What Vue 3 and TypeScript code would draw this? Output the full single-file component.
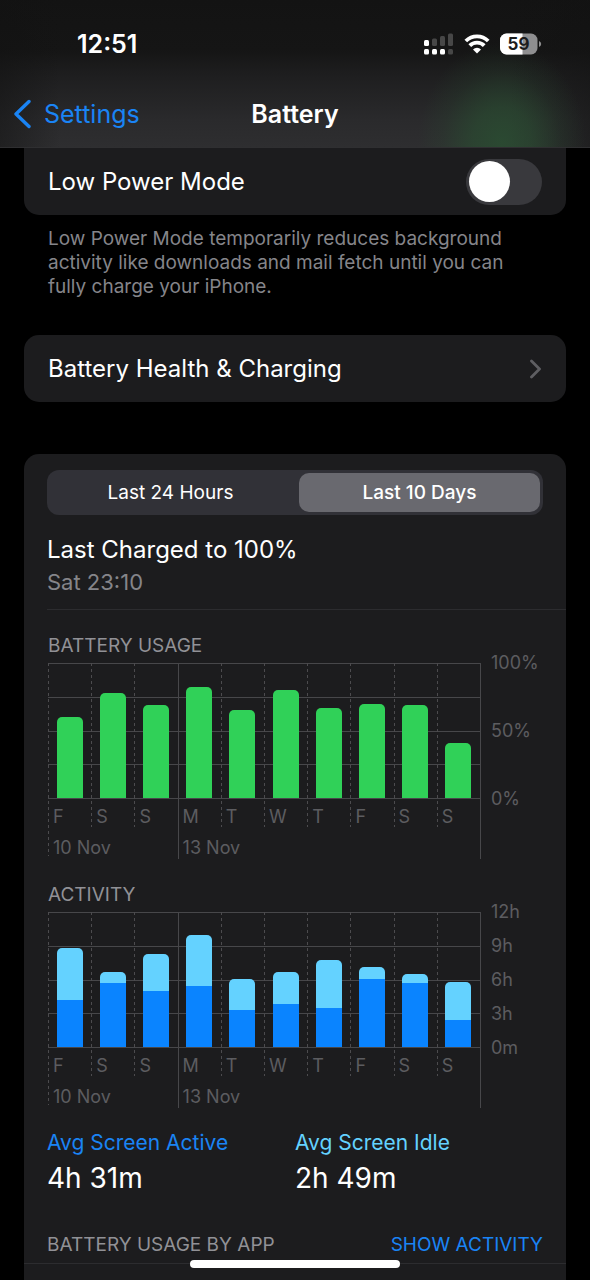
<script setup lang="ts">
import { ref } from 'vue'

interface Segment {
  kind: string
  share: number
}

interface Day {
  letter: string
  date?: string
  weekStart?: boolean
  total: number
  segments: Segment[]
}

interface Chart {
  title: string
  rows: number
  ticks: string[]
  days: Day[]
}

const letters = ['F', 'S', 'S', 'M', 'T', 'W', 'T', 'F', 'S', 'S']
const dates: Record<number, string> = { 0: '10 Nov', 3: '13 Nov' }

const usagePercent = [60, 78, 69, 82, 65, 80, 67, 70, 69, 41]
const totalMinutes = [526, 400, 496, 597, 363, 400, 464, 425, 389, 345]
const activeMinutes = [252, 343, 300, 324, 196, 231, 206, 361, 340, 142]

function makeDay(index: number, total: number, segments: Segment[]): Day {
  return {
    letter: letters[index],
    date: dates[index],
    weekStart: letters[index] === 'M',
    total,
    segments,
  }
}

const charts: Chart[] = [
  {
    title: 'BATTERY USAGE',
    rows: 4,
    ticks: ['100%', '50%', '0%'],
    days: usagePercent.map((p, i) => makeDay(i, p, [{ kind: 'usage', share: 100 }])),
  },
  {
    title: 'ACTIVITY',
    rows: 4,
    ticks: ['12h', '9h', '6h', '3h', '0m'],
    days: totalMinutes.map((m, i) => {
      const active = (activeMinutes[i] / m) * 100
      return makeDay(i, (m / 720) * 100, [
        { kind: 'idle', share: 100 - active },
        { kind: 'active', share: active },
      ])
    }),
  },
]

const ranges = ['Last 24 Hours', 'Last 10 Days']
const selectedRange = ref('Last 10 Days')
const lowPower = ref(false)
</script>

<template>
  <div class="screen">
    <header class="top">
      <div class="status">
        <time class="clock">12:51</time>
        <div class="indicators">
          <svg class="signal" width="30" height="22" viewBox="0 0 30 22" aria-hidden="true">
            <g fill="#fff">
              <rect x="0" y="7" width="5" height="6" rx="1.5" />
              <rect x="0" y="16" width="5" height="5.5" rx="1.5" />
              <rect x="8" y="16" width="5" height="5.5" rx="1.5" />
              <rect x="16" y="16" width="5" height="5.5" rx="1.5" />
            </g>
            <g fill="#474747">
              <rect x="8" y="5.5" width="5" height="7.5" rx="1.5" />
              <rect x="16" y="3" width="5" height="10" rx="1.5" />
              <rect x="24" y="0.5" width="5" height="12.5" rx="1.5" />
              <rect x="24" y="16" width="5" height="5.5" rx="1.5" />
            </g>
          </svg>
          <svg class="wifi" width="26" height="20" viewBox="0 0 26 20" aria-hidden="true">
            <g fill="none" stroke="#fff" stroke-width="3.8">
              <path d="M1.8 7 A16 16 0 0 1 24.2 7" />
              <path d="M5.8 11.6 A10 10 0 0 1 20.2 11.6" />
            </g>
            <path d="M13 19.4 L9 15.4 A5.6 5.6 0 0 1 17 15.4 Z" fill="#fff" />
          </svg>
          <svg class="cell" width="42" height="22" viewBox="0 0 42 22" role="img" aria-label="59 percent">
            <defs>
              <clipPath id="cell-body"><rect x="0" y="0.5" width="37.5" height="21" rx="6.5" /></clipPath>
            </defs>
            <g clip-path="url(#cell-body)">
              <rect width="38" height="22" fill="#8f8f90" />
              <rect width="22.5" height="22" fill="#fff" />
            </g>
            <path d="M39 8 Q41.2 8.8 41.2 11 Q41.2 13.2 39 14 Z" fill="#8f8f90" />
            <text x="18.5" y="17.2" text-anchor="middle" class="cell-text">59</text>
          </svg>
        </div>
      </div>
      <nav class="nav">
        <a class="back" href="#settings">
          <svg width="18" height="30" viewBox="0 0 18 30" aria-hidden="true">
            <path d="M15 2.5 L2 15 L15 27.5" fill="none" stroke="currentColor" stroke-width="3.4" stroke-linecap="round" stroke-linejoin="round" />
          </svg>
          <span>Settings</span>
        </a>
        <h1>Battery</h1>
      </nav>
    </header>

    <main class="content">
      <section class="card power">
        <label class="row" for="low-power">
          <span>Low Power Mode</span>
          <input id="low-power" v-model="lowPower" class="switch" type="checkbox" role="switch" />
        </label>
      </section>
      <p class="note">
        Low Power Mode temporarily reduces background activity like downloads and mail fetch until you can fully charge your iPhone.
      </p>

      <a class="card row health" href="#health">
        <span>Battery Health &amp; Charging</span>
        <svg width="12" height="20" viewBox="0 0 12 20" aria-hidden="true">
          <path d="M1.5 2 L9.5 10 L1.5 18" fill="none" stroke="#5e5e62" stroke-width="2.8" stroke-linecap="round" stroke-linejoin="round" />
        </svg>
      </a>

      <section class="card stats">
        <div class="segmented" role="group" aria-label="Time range">
          <button
            v-for="range in ranges"
            :key="range"
            type="button"
            :class="{ selected: range === selectedRange }"
            :aria-pressed="range === selectedRange"
            @click="selectedRange = range"
          >{{ range }}</button>
        </div>

        <div class="charged">
          <h2>Last Charged to 100%</h2>
          <p>Sat 23:10</p>
        </div>

        <section v-for="chart in charts" :key="chart.title" class="chart">
          <h3>{{ chart.title }}</h3>
          <div class="graph">
            <div class="plot">
              <div class="lines" aria-hidden="true">
                <i v-for="n in chart.rows" :key="n"></i>
              </div>
              <div
                v-for="(day, i) in chart.days"
                :key="i"
                class="day"
                :class="{ dated: day.date, solid: day.weekStart }"
              >
                <div class="slot">
                  <div class="bar" :style="{ height: day.total + '%' }">
                    <div
                      v-for="segment in day.segments"
                      :key="segment.kind"
                      :class="segment.kind"
                      :style="{ height: segment.share + '%' }"
                    ></div>
                  </div>
                </div>
                <span class="letter">{{ day.letter }}</span>
                <span v-if="day.date" class="date">{{ day.date }}</span>
              </div>
            </div>
            <div class="ticks">
              <span v-for="tick in chart.ticks" :key="tick">{{ tick }}</span>
            </div>
          </div>
        </section>

        <dl class="averages">
          <div>
            <dt class="is-active">Avg Screen Active</dt>
            <dd>4h 31m</dd>
          </div>
          <div>
            <dt class="is-idle">Avg Screen Idle</dt>
            <dd>2h 49m</dd>
          </div>
        </dl>

        <div class="apps">
          <h3>BATTERY USAGE BY APP</h3>
          <button type="button">SHOW ACTIVITY</button>
        </div>
      </section>
    </main>
    <div class="home" aria-hidden="true"></div>
  </div>
</template>

<style>
body {
  margin: 0;
  background: #000;
}
</style>

<style scoped>
.screen {
  display: flex;
  flex-direction: column;
  min-height: 100vh;
  background: #000;
  color: #fff;
  font-family: Inter, "Liberation Sans", sans-serif;
  font-size: 24px;
  line-height: 32px;
}

.screen *,
.screen *::before {
  box-sizing: border-box;
}

h1, h2, h3, p, dl, dd {
  margin: 0;
  font-size: inherit;
  font-weight: 400;
}

a {
  color: inherit;
  text-decoration: none;
}

button {
  padding: 0;
  border: 0;
  background: none;
  color: inherit;
  font: inherit;
}

svg {
  display: block;
  flex: none;
}

.top {
  display: flex;
  flex-direction: column;
  height: 148px;
  border-bottom: 1px solid #2f2f31;
  background:
    radial-gradient(ellipse 84px 100px at 502px 142px, rgba(42, 80, 50, 0.8), rgba(42, 80, 50, 0.6) 35%, rgba(42, 80, 50, 0.2) 70%, transparent),
    linear-gradient(90deg, rgba(18, 18, 18, 0.5), transparent 60px calc(100% - 80px), rgba(18, 18, 18, 0.5)),
    linear-gradient(#131313, #151515 50px, #1e1e1f 75px, #2a2a2c 120px, #2e2e30);
}

.status {
  display: flex;
  align-items: center;
  justify-content: space-between;
  height: 88px;
  padding: 0 48px 0 77px;
}

.clock {
  font-size: 25px;
  font-weight: 600;
}

.indicators {
  display: flex;
  align-items: center;
  gap: 10px;
}

.cell-text {
  font-size: 17px;
  font-weight: 700;
  fill: #1c1c1c;
}

.nav {
  display: grid;
  grid-template-columns: 1fr auto 1fr;
  align-items: center;
  height: 52px;
  padding: 0 14px;
  font-size: 25px;
}

.back {
  display: flex;
  align-items: center;
  gap: 12px;
  color: #1a84f5;
}

h1 {
  font-weight: 600;
}

.content {
  display: flex;
  flex: 1;
  flex-direction: column;
  padding: 0 24px;
}

.card {
  border-radius: 15px;
  background: #1c1c1e;
}

.row {
  display: flex;
  align-items: center;
  justify-content: space-between;
  height: 67px;
  padding: 0 24px;
}

.power {
  border-radius: 0 0 15px 15px;
}

.switch {
  display: flex;
  align-items: center;
  width: 76px;
  height: 46px;
  margin: 0;
  padding: 0 3px;
  border-radius: 23px;
  background: #39393d;
  appearance: none;
}

.switch::before {
  width: 41px;
  height: 41px;
  border-radius: 50%;
  background: #fff;
  content: "";
}

.switch:checked {
  justify-content: flex-end;
  background: #30d158;
}

.note {
  padding: 12px 24px 36px;
  color: #85858a;
  font-size: 19px;
  line-height: 24px;
}

.stats {
  flex: 1;
  margin-top: 52px;
  padding: 16px 23px 0;
  border-radius: 15px 15px 0 0;
}

.segmented {
  display: grid;
  grid-template-columns: 1fr 1fr;
  gap: 8px;
  height: 45px;
  padding: 3px;
  border-radius: 12px;
  background: #313137;
  font-size: 19px;
}

.segmented button {
  border-radius: 10px;
}

.segmented .selected {
  background: #69696f;
  font-weight: 500;
}

.charged {
  margin-right: -23px;
  padding: 19px 0 10px;
  border-bottom: 1px solid #2c2c2f;
}

.charged p {
  color: #85858a;
  font-size: 22px;
  line-height: 33px;
}

h3 {
  color: #919196;
  font-size: 19px;
  line-height: 24px;
}

.chart {
  padding: 24px 0 0 1px;
}

.graph {
  display: grid;
  grid-template-columns: 1fr 62px;
  margin-top: 5px;
  color: #5c5c60;
  font-size: 18px;
  line-height: 20px;
}

.plot {
  position: relative;
  display: grid;
  grid-template-columns: repeat(10, minmax(0, 1fr));
  height: 196px;
  border-right: 1px solid #47474a;
}

.lines {
  position: absolute;
  inset: 0 0 auto;
  display: grid;
  grid-auto-rows: 1fr;
  height: 136px;
  border-bottom: 1px solid #47474a;
}

.lines i {
  border-top: 1px solid #47474a;
}

.day {
  position: relative;
  height: 164px;
  background: repeating-linear-gradient(#4c4b4e 0 3px, transparent 3px 6px) left / 1px 100% no-repeat;
}

.day.dated {
  height: 193px;
}

.day.solid {
  height: 196px;
  background: linear-gradient(#47474a, #47474a) left / 1px 100% no-repeat;
}

.slot {
  display: flex;
  align-items: flex-end;
  justify-content: center;
  height: 135px;
}

.bar {
  width: 60%;
  overflow: hidden;
  border-radius: 5px 5px 0 0;
}

.usage {
  background: #30d158;
}

.idle {
  background: #64d2ff;
}

.active {
  background: #0a84ff;
}

.letter,
.date {
  display: block;
  padding-left: 5px;
  white-space: nowrap;
}

.letter {
  margin-top: 9px;
}

.date {
  margin-top: 11px;
}

.ticks {
  display: flex;
  flex-direction: column;
  justify-content: space-between;
  height: 156px;
  margin-top: -10px;
  padding-left: 10px;
}

.averages {
  display: grid;
  grid-template-columns: 1fr 1fr;
  padding-top: 19px;
}

dt {
  font-size: 21px;
}

dd {
  font-size: 28px;
  line-height: 38px;
}

.is-active {
  color: #1a84f5;
}

.is-idle {
  color: #64d2ff;
}

.apps {
  display: flex;
  align-items: center;
  justify-content: space-between;
  margin: 36px -23px 0;
  padding: 0 23px 6px;
  border-bottom: 1px solid #2c2c2f;
  line-height: 24px;
}

.apps button {
  color: #1a84f5;
  font-size: 19px;
}

.home {
  position: fixed;
  bottom: 12px;
  left: 50%;
  width: 210px;
  height: 8px;
  margin-left: -105px;
  border-radius: 4px;
  background: #fff;
}
</style>
